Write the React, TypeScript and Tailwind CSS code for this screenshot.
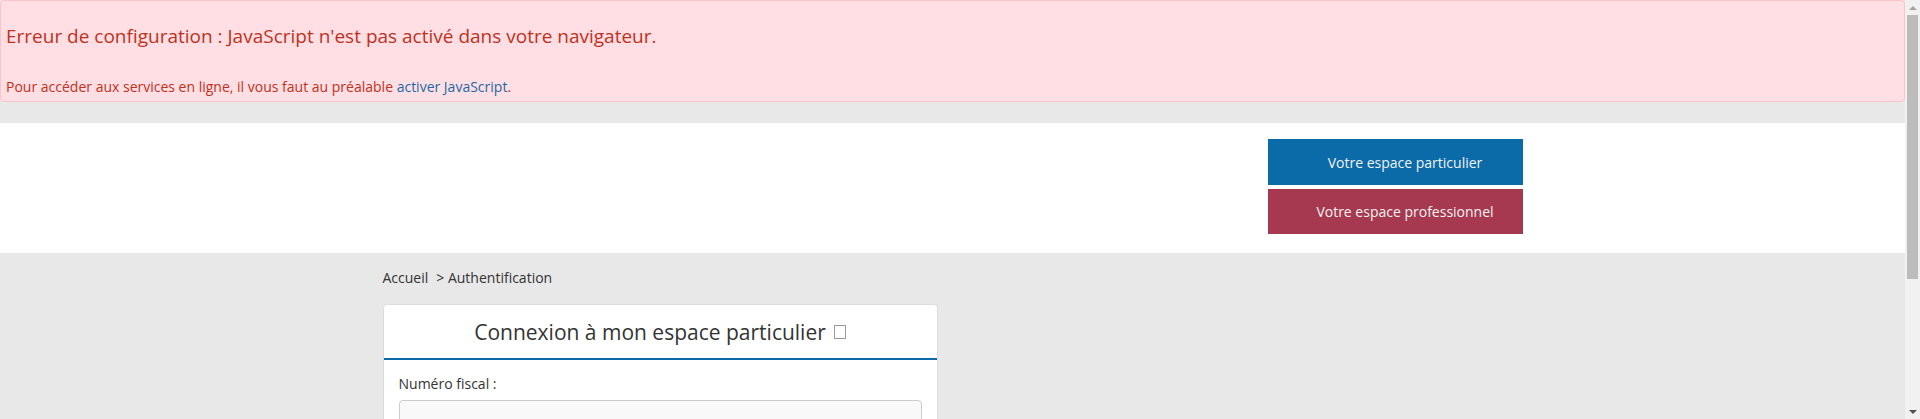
export default function App() {
  return (
    <div className="flex h-[419px] overflow-hidden bg-[#e8e8e8] font-['Open_Sans',sans-serif] text-[#333]">
      <div className="flex-1 min-w-0">
        {/* alerte javascript */}
        <div className="h-[102px] border border-[#fbc3cc] bg-[#ffdfe3] rounded-[4px] px-[5px] pt-[22px] text-[#c1301d]">
          <h1 className="text-[19px] leading-[26px]">
            Erreur de configuration : JavaScript n'est pas activé dans votre navigateur.
          </h1>
          <p className="mt-[29px] text-[14px] leading-[18px]">
            Pour accéder aux services en ligne, il vous faut au préalable{" "}
            <a href="#" className="text-[#1b6aa5]">activer JavaScript</a>.
          </p>
        </div>

        {/* entete */}
        <div className="mt-[21px] h-[130px] bg-white">
          <div className="w-[1140px] mx-auto flex justify-end pt-[16px]">
            <div className="flex flex-col gap-[4px] w-[255px]">
              <a href="#" className="h-[46px] flex items-center justify-center pl-[20px] bg-[#0b6aa8] text-[#f2f2f2] text-[14px]">
                Votre espace particulier
              </a>
              <a href="#" className="h-[45px] flex items-center justify-center pl-[20px] bg-[#a6394f] text-[#f2f2f2] text-[14px]">
                Votre espace professionnel
              </a>
            </div>
          </div>
        </div>

        {/* contenu */}
        <div className="w-[1140px] mx-auto">
          <div className="pt-[15px] text-[14px] leading-[20px] flex">
            <span>Accueil</span>
            <span className="ml-[8px]">&gt; Authentification</span>
          </div>
          <div className="mt-[16px] w-[555px] bg-white border border-[#dddddd] rounded-[4px]">
            <div className="h-[55px] flex items-center justify-center border-b-2 border-[#0b6aa8]">
              <h2 className="text-[21px] leading-[30px] flex items-center">
                Connexion à mon espace particulier
                <span className="inline-block ml-[8px] w-[12px] h-[14px] border border-[#9a9a9a]"></span>
              </h2>
            </div>
            <div className="px-[15px] pt-[14px] pb-[15px]">
              <label className="block text-[14px] leading-[20px] mb-[6px]">Numéro fiscal :</label>
              <input type="text" className="block w-full h-[36px] bg-[#f9f9f9] border border-[#cccccc] rounded-[4px]" />
            </div>
          </div>
        </div>
      </div>

      {/* barre de defilement */}
      <div className="w-[15px] bg-[#f1f1f1] flex flex-col items-center">
        <div className="h-[15px] flex items-center justify-center">
          <div className="w-0 h-0 border-l-[4px] border-r-[4px] border-b-[4px] border-l-transparent border-r-transparent border-b-[#a3a3a3]"></div>
        </div>
        <div className="w-[11px] h-[264px] bg-[#bcbcbc]"></div>
        <div className="flex-1"></div>
        <div className="h-[15px] flex items-center justify-center">
          <div className="w-0 h-0 border-l-[4px] border-r-[4px] border-t-[4px] border-l-transparent border-r-transparent border-t-[#505050]"></div>
        </div>
      </div>
    </div>
  );
}
